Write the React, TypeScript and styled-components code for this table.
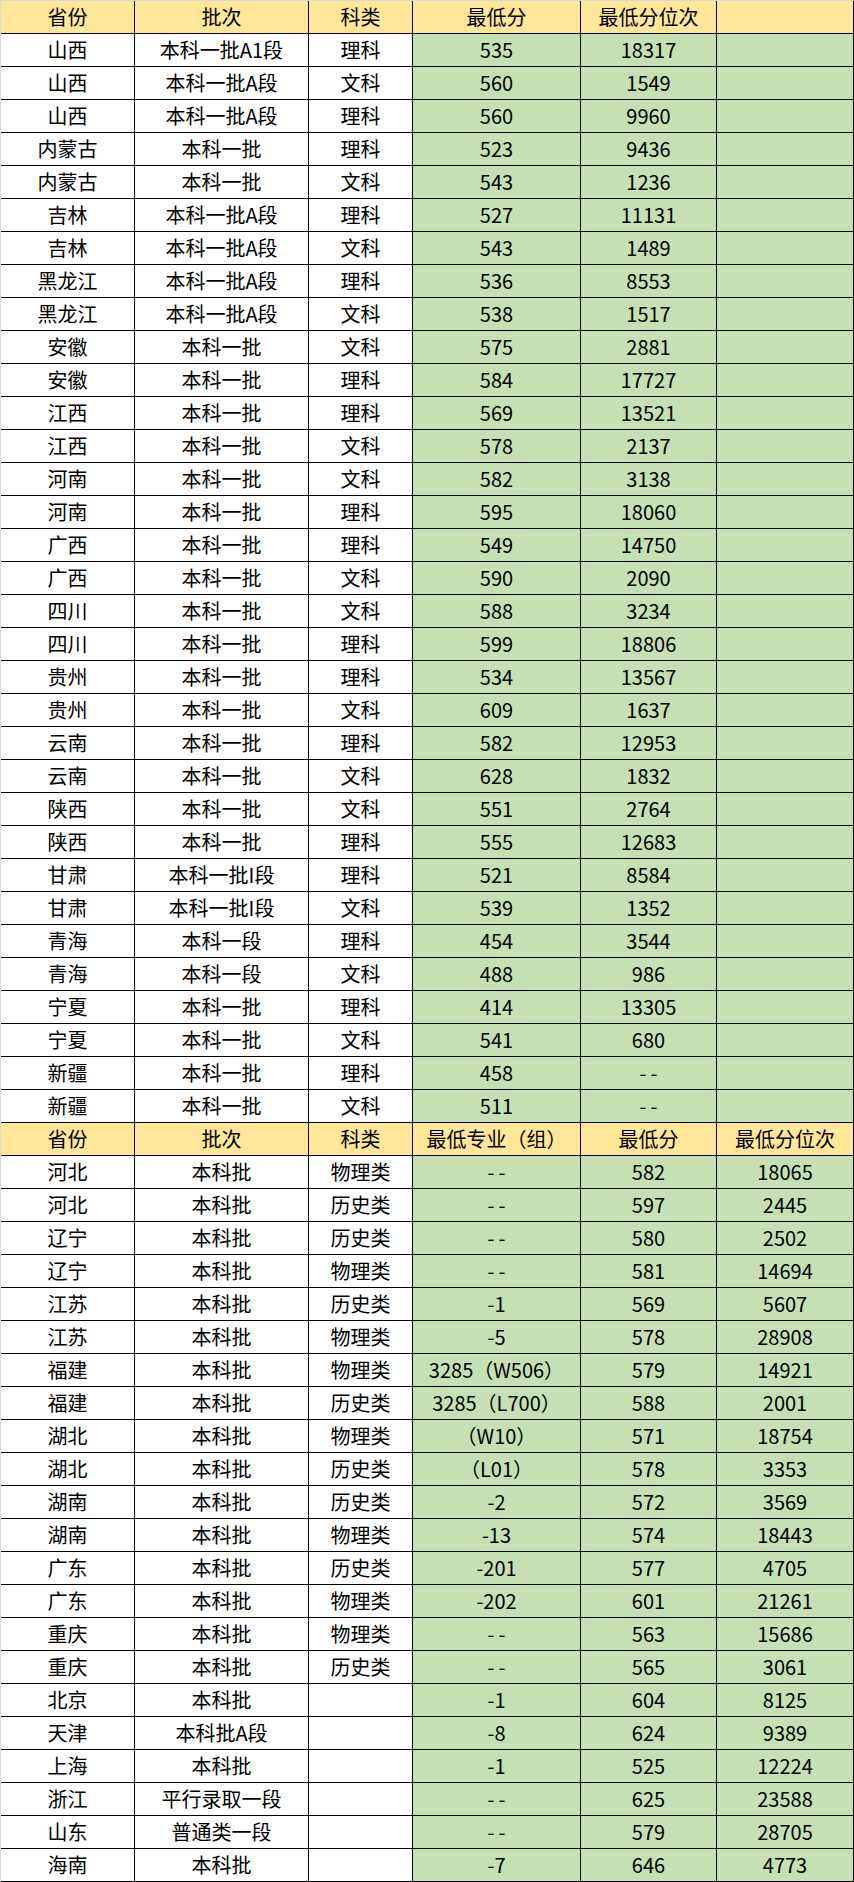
import React from "react";
import styled, { createGlobalStyle } from "styled-components";

const GlobalStyle = createGlobalStyle`
  html, body { margin: 0; padding: 0; background: #ffffff; }
  body { font-family: "Noto Sans CJK SC", "Noto Sans", sans-serif; }
`;

const Sheet = styled.div`
  display: grid;
  grid-template-columns: 134px 174px 104px 168px 136px 137px;
  grid-auto-rows: 33px;
  width: 854px;
  box-sizing: border-box;
  border-top: 1px solid #d9d9d9;
  border-left: 1px solid #d9d9d9;
  color: #000;
`;

type Tone = "head" | "plain" | "green";

const Cell = styled.div<{ $tone: Tone }>`
  box-sizing: border-box;
  border-right: 1px solid #000;
  border-bottom: 1px solid #000;
  display: flex;
  align-items: center;
  justify-content: center;
  font-size: 20px;
  line-height: 1;
  white-space: nowrap;
  overflow: hidden;
  background: ${(p) =>
    p.$tone === "head" ? "#ffe699" : p.$tone === "green" ? "#c6e0b4" : "#ffffff"};
`;

const Dash = styled.span`
  letter-spacing: 4px;
  margin-right: -4px;
`;

const table1: string[][] = [
  ["山西", "本科一批A1段", "理科", "535", "18317"],
  ["山西", "本科一批A段", "文科", "560", "1549"],
  ["山西", "本科一批A段", "理科", "560", "9960"],
  ["内蒙古", "本科一批", "理科", "523", "9436"],
  ["内蒙古", "本科一批", "文科", "543", "1236"],
  ["吉林", "本科一批A段", "理科", "527", "11131"],
  ["吉林", "本科一批A段", "文科", "543", "1489"],
  ["黑龙江", "本科一批A段", "理科", "536", "8553"],
  ["黑龙江", "本科一批A段", "文科", "538", "1517"],
  ["安徽", "本科一批", "文科", "575", "2881"],
  ["安徽", "本科一批", "理科", "584", "17727"],
  ["江西", "本科一批", "理科", "569", "13521"],
  ["江西", "本科一批", "文科", "578", "2137"],
  ["河南", "本科一批", "文科", "582", "3138"],
  ["河南", "本科一批", "理科", "595", "18060"],
  ["广西", "本科一批", "理科", "549", "14750"],
  ["广西", "本科一批", "文科", "590", "2090"],
  ["四川", "本科一批", "文科", "588", "3234"],
  ["四川", "本科一批", "理科", "599", "18806"],
  ["贵州", "本科一批", "理科", "534", "13567"],
  ["贵州", "本科一批", "文科", "609", "1637"],
  ["云南", "本科一批", "理科", "582", "12953"],
  ["云南", "本科一批", "文科", "628", "1832"],
  ["陕西", "本科一批", "文科", "551", "2764"],
  ["陕西", "本科一批", "理科", "555", "12683"],
  ["甘肃", "本科一批I段", "理科", "521", "8584"],
  ["甘肃", "本科一批I段", "文科", "539", "1352"],
  ["青海", "本科一段", "理科", "454", "3544"],
  ["青海", "本科一段", "文科", "488", "986"],
  ["宁夏", "本科一批", "理科", "414", "13305"],
  ["宁夏", "本科一批", "文科", "541", "680"],
  ["新疆", "本科一批", "理科", "458", "--"],
  ["新疆", "本科一批", "文科", "511", "--"],
];

const table2: string[][] = [
  ["河北", "本科批", "物理类", "--", "582", "18065"],
  ["河北", "本科批", "历史类", "--", "597", "2445"],
  ["辽宁", "本科批", "历史类", "--", "580", "2502"],
  ["辽宁", "本科批", "物理类", "--", "581", "14694"],
  ["江苏", "本科批", "历史类", "-1", "569", "5607"],
  ["江苏", "本科批", "物理类", "-5", "578", "28908"],
  ["福建", "本科批", "物理类", "3285（W506）", "579", "14921"],
  ["福建", "本科批", "历史类", "3285（L700）", "588", "2001"],
  ["湖北", "本科批", "物理类", "（W10）", "571", "18754"],
  ["湖北", "本科批", "历史类", "（L01）", "578", "3353"],
  ["湖南", "本科批", "历史类", "-2", "572", "3569"],
  ["湖南", "本科批", "物理类", "-13", "574", "18443"],
  ["广东", "本科批", "历史类", "-201", "577", "4705"],
  ["广东", "本科批", "物理类", "-202", "601", "21261"],
  ["重庆", "本科批", "物理类", "--", "563", "15686"],
  ["重庆", "本科批", "历史类", "--", "565", "3061"],
  ["北京", "本科批", "", "-1", "604", "8125"],
  ["天津", "本科批A段", "", "-8", "624", "9389"],
  ["上海", "本科批", "", "-1", "525", "12224"],
  ["浙江", "平行录取一段", "", "--", "625", "23588"],
  ["山东", "普通类一段", "", "--", "579", "28705"],
  ["海南", "本科批", "", "-7", "646", "4773"],
];

const head1 = ["省份", "批次", "科类", "最低分", "最低分位次", ""];
const head2 = ["省份", "批次", "科类", "最低专业（组）", "最低分", "最低分位次"];

function Row({ cells, head }: { cells: string[]; head?: boolean }) {
  return (
    <>
      {cells.map((c, i) => (
        <Cell key={i} $tone={head ? "head" : i >= 3 ? "green" : "plain"}>
          {c === "--" ? <Dash>{c}</Dash> : c}
        </Cell>
      ))}
    </>
  );
}

export default function App() {
  return (
    <>
      <GlobalStyle />
      <Sheet>
        <Row cells={head1} head />
        {table1.map((r, i) => (
          <Row key={"a" + i} cells={[...r, ""]} />
        ))}
        <Row cells={head2} head />
        {table2.map((r, i) => (
          <Row key={"b" + i} cells={r} />
        ))}
      </Sheet>
    </>
  );
}
